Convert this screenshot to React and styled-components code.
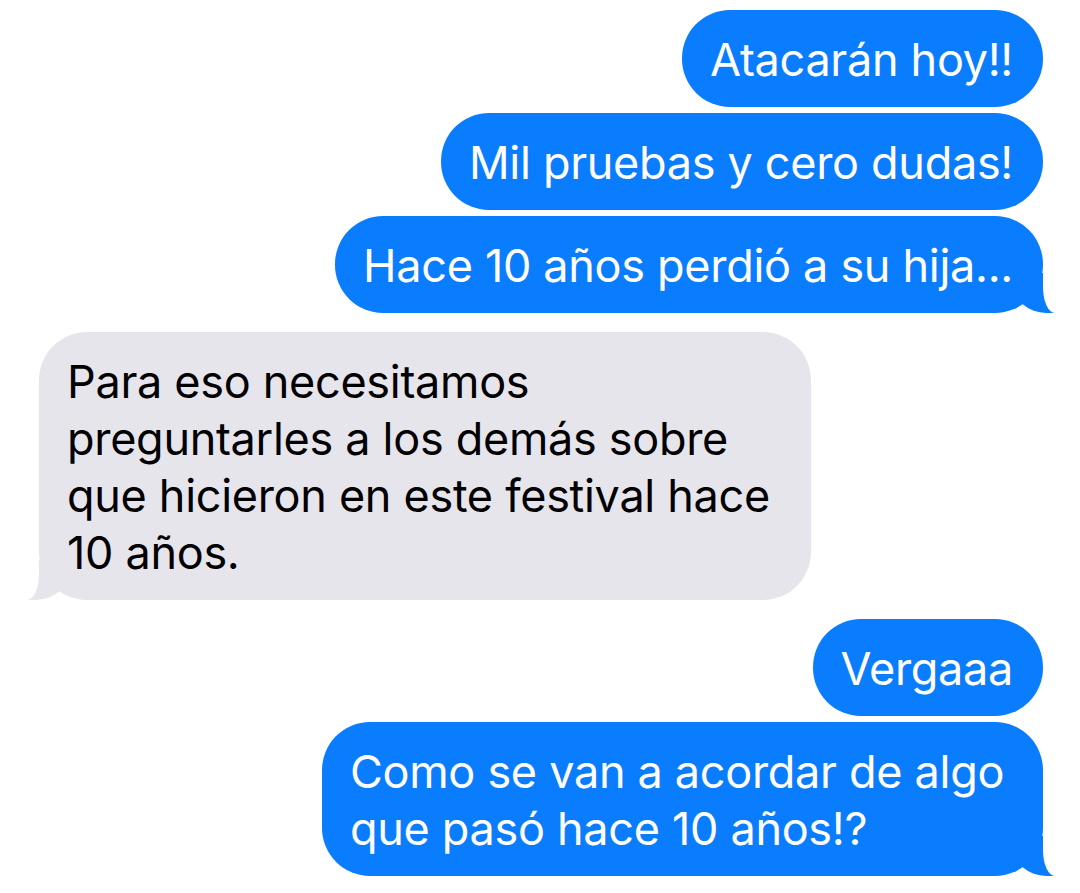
import styled, { createGlobalStyle, css } from "styled-components";

const BLUE = "#0a7dff";
const GRAY = "#e6e5eb";

const GlobalStyle = createGlobalStyle`
    body {
        margin: 0;
        background: #ffffff;
        font-family: "Inter", "Roboto", "Liberation Sans", sans-serif;
    }
`;

const Thread = styled.div`
    display: flex;
    flex-direction: column;
    gap: 19px;
    padding: 10px 37px 0 39px;
`;

const Group = styled.div`
    display: flex;
    flex-direction: column;
    align-items: ${(p) => (p.$me ? "flex-end" : "flex-start")};
    gap: 6px;
`;

const tailRight = css`
    &::before {
        content: "";
        position: absolute;
        z-index: -1;
        bottom: 0;
        right: -11px;
        width: 40px;
        height: 40px;
        background: ${BLUE};
        border-bottom-left-radius: 32px 28px;
    }
    &::after {
        content: "";
        position: absolute;
        z-index: -1;
        bottom: 0;
        right: -40px;
        width: 40px;
        height: 44px;
        background: #ffffff;
        border-bottom-left-radius: 12px 26px;
    }
`;

const tailLeft = css`
    &::before {
        content: "";
        position: absolute;
        z-index: -1;
        bottom: 0;
        left: -11px;
        width: 40px;
        height: 40px;
        background: ${GRAY};
        border-bottom-right-radius: 32px 28px;
    }
    &::after {
        content: "";
        position: absolute;
        z-index: -1;
        bottom: 0;
        left: -40px;
        width: 40px;
        height: 44px;
        background: #ffffff;
        border-bottom-right-radius: 12px 26px;
    }
`;

const Bubble = styled.div`
    position: relative;
    z-index: 0;
    box-sizing: border-box;
    width: ${(p) => (p.$width ? `${p.$width}px` : "auto")};
    padding: 21px 30px 19px 28px;
    border-radius: 48px;
    background: ${(p) => (p.$me ? BLUE : GRAY)};
    color: ${(p) => (p.$me ? "#ffffff" : "#000000")};
    font-size: 45px;
    line-height: 57px;
    letter-spacing: -0.3px;
    white-space: nowrap;
    ${(p) => p.$tail && (p.$me ? tailRight : tailLeft)}
`;

const groups = [
    {
        me: true,
        messages: [
            { lines: ["Atacarán hoy!!"] },
            { lines: ["Mil pruebas y cero dudas!"] },
            { lines: ["Hace 10 años perdió a su hija..."] },
        ],
    },
    {
        me: false,
        messages: [
            {
                width: 772,
                lines: [
                    "Para eso necesitamos",
                    "preguntarles a los demás sobre",
                    "que hicieron en este festival hace",
                    "10 años.",
                ],
            },
        ],
    },
    {
        me: true,
        messages: [
            { lines: ["Vergaaa"] },
            {
                width: 721,
                lines: ["Como se van a acordar de algo", "que pasó hace 10 años!?"],
            },
        ],
    },
];

export default function App() {
    return (
        <>
            <GlobalStyle />
            <Thread>
                {groups.map((g, gi) => (
                    <Group key={gi} $me={g.me}>
                        {g.messages.map((m, mi) => (
                            <Bubble
                                key={mi}
                                $me={g.me}
                                $width={m.width}
                                $tail={mi === g.messages.length - 1}
                            >
                                {m.lines.map((line, li) => (
                                    <span key={li}>
                                        {line}
                                        {li < m.lines.length - 1 && <br />}
                                    </span>
                                ))}
                            </Bubble>
                        ))}
                    </Group>
                ))}
            </Thread>
        </>
    );
}
